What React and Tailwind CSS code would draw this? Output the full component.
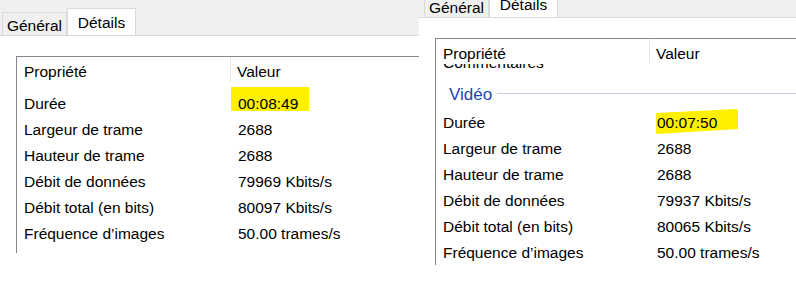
import React from 'react';

const leftRows = [
  ['Durée', '00:08:49'],
  ['Largeur de trame', '2688'],
  ['Hauteur de trame', '2688'],
  ['Débit de données', '79969 Kbits/s'],
  ['Débit total (en bits)', '80097 Kbits/s'],
  ['Fréquence d’images', '50.00 trames/s'],
];

const rightRows = [
  ['Durée', '00:07:50'],
  ['Largeur de trame', '2688'],
  ['Hauteur de trame', '2688'],
  ['Débit de données', '79937 Kbits/s'],
  ['Débit total (en bits)', '80065 Kbits/s'],
  ['Fréquence d’images', '50.00 trames/s'],
];

function Tabs({ tall, offset }) {
  return (
    <div
      className={`${tall ? 'h-[36px]' : 'h-[18px]'} ${offset} bg-[#f0f0f0] border-b border-[#d9d9d9] flex items-end overflow-hidden shrink-0`}
    >
      <div className="h-[23px] w-[65px] border border-b-0 border-[#d9d9d9] bg-[#f0f0f0] flex justify-center pt-[3px] leading-[19px]">
        Général
      </div>
      <div className="h-[28px] w-[69px] -mb-px border border-b-0 border-[#d9d9d9] bg-white flex justify-center pt-[4px] leading-[19px]">
        Détails
      </div>
    </div>
  );
}

function Header() {
  return (
    <div className="h-[25px] flex shrink-0 bg-white">
      <div className="w-[214px] border-r border-[#e5e5e5] pl-[7px] pt-[4px] leading-[21px]">Propriété</div>
      <div className="pl-[6px] pt-[4px] leading-[21px]">Valeur</div>
    </div>
  );
}

function Row({ label, value, mark }) {
  return (
    <div className="h-[26px] flex items-center">
      <div className="w-[214px] pl-[7px] shrink-0">{label}</div>
      <div className="relative h-full flex items-center pl-[7px]">
        {mark === 'box' && (
          <span className="absolute left-0 top-[-4px] w-[78px] h-[24px] bg-[#fff000]" />
        )}
        {mark === 'stroke' && (
          <svg className="absolute left-[6px] top-[-1px]" width="82" height="25" viewBox="0 0 82 25">
            <polygon points="0,4 80,0 82,1 82,20 1,25 0,24" fill="#fff000" />
          </svg>
        )}
        <span className="relative">{value}</span>
      </div>
    </div>
  );
}

export default function App() {
  return (
    <div className="w-[796px] h-[283px] overflow-hidden bg-white flex text-black text-[15.5px] font-['Liberation_Sans',Arial,sans-serif]">
      {/* capture de gauche */}
      <div className="w-[419px] shrink-0 flex flex-col">
        <Tabs tall offset="pl-[2px]" />
        <div className="pl-4 pt-5">
          <div className="h-[197px] border-l border-t border-[#828790] flex flex-col">
            <Header />
            <div className="mt-[9px]">
              {leftRows.map(([label, value], i) => (
                <Row key={label} label={label} value={value} mark={i === 0 ? 'box' : null} />
              ))}
            </div>
          </div>
        </div>
      </div>

      {/* capture de droite */}
      <div className="flex-1 flex flex-col">
        <Tabs offset="pl-[5px]" />
        <div className="pl-4 pt-5">
          <div className="h-[227px] border-l border-t border-[#828790] flex flex-col">
            <Header />
            <div className="flex-1 overflow-hidden">
              <div className="h-[26px] -mt-[14px] flex items-center pl-[7px]">Commentaires</div>
              <div className="h-[34px] pt-[4px] flex items-center pl-[13px]">
                <span className="text-[17px] text-[#2147b0]">Vidéo</span>
                <span className="flex-1 h-px bg-[#c5cde3] ml-[5px] mb-[3px]" />
              </div>
              {rightRows.map(([label, value], i) => (
                <Row key={label} label={label} value={value} mark={i === 0 ? 'stroke' : null} />
              ))}
            </div>
          </div>
        </div>
      </div>
    </div>
  );
}
